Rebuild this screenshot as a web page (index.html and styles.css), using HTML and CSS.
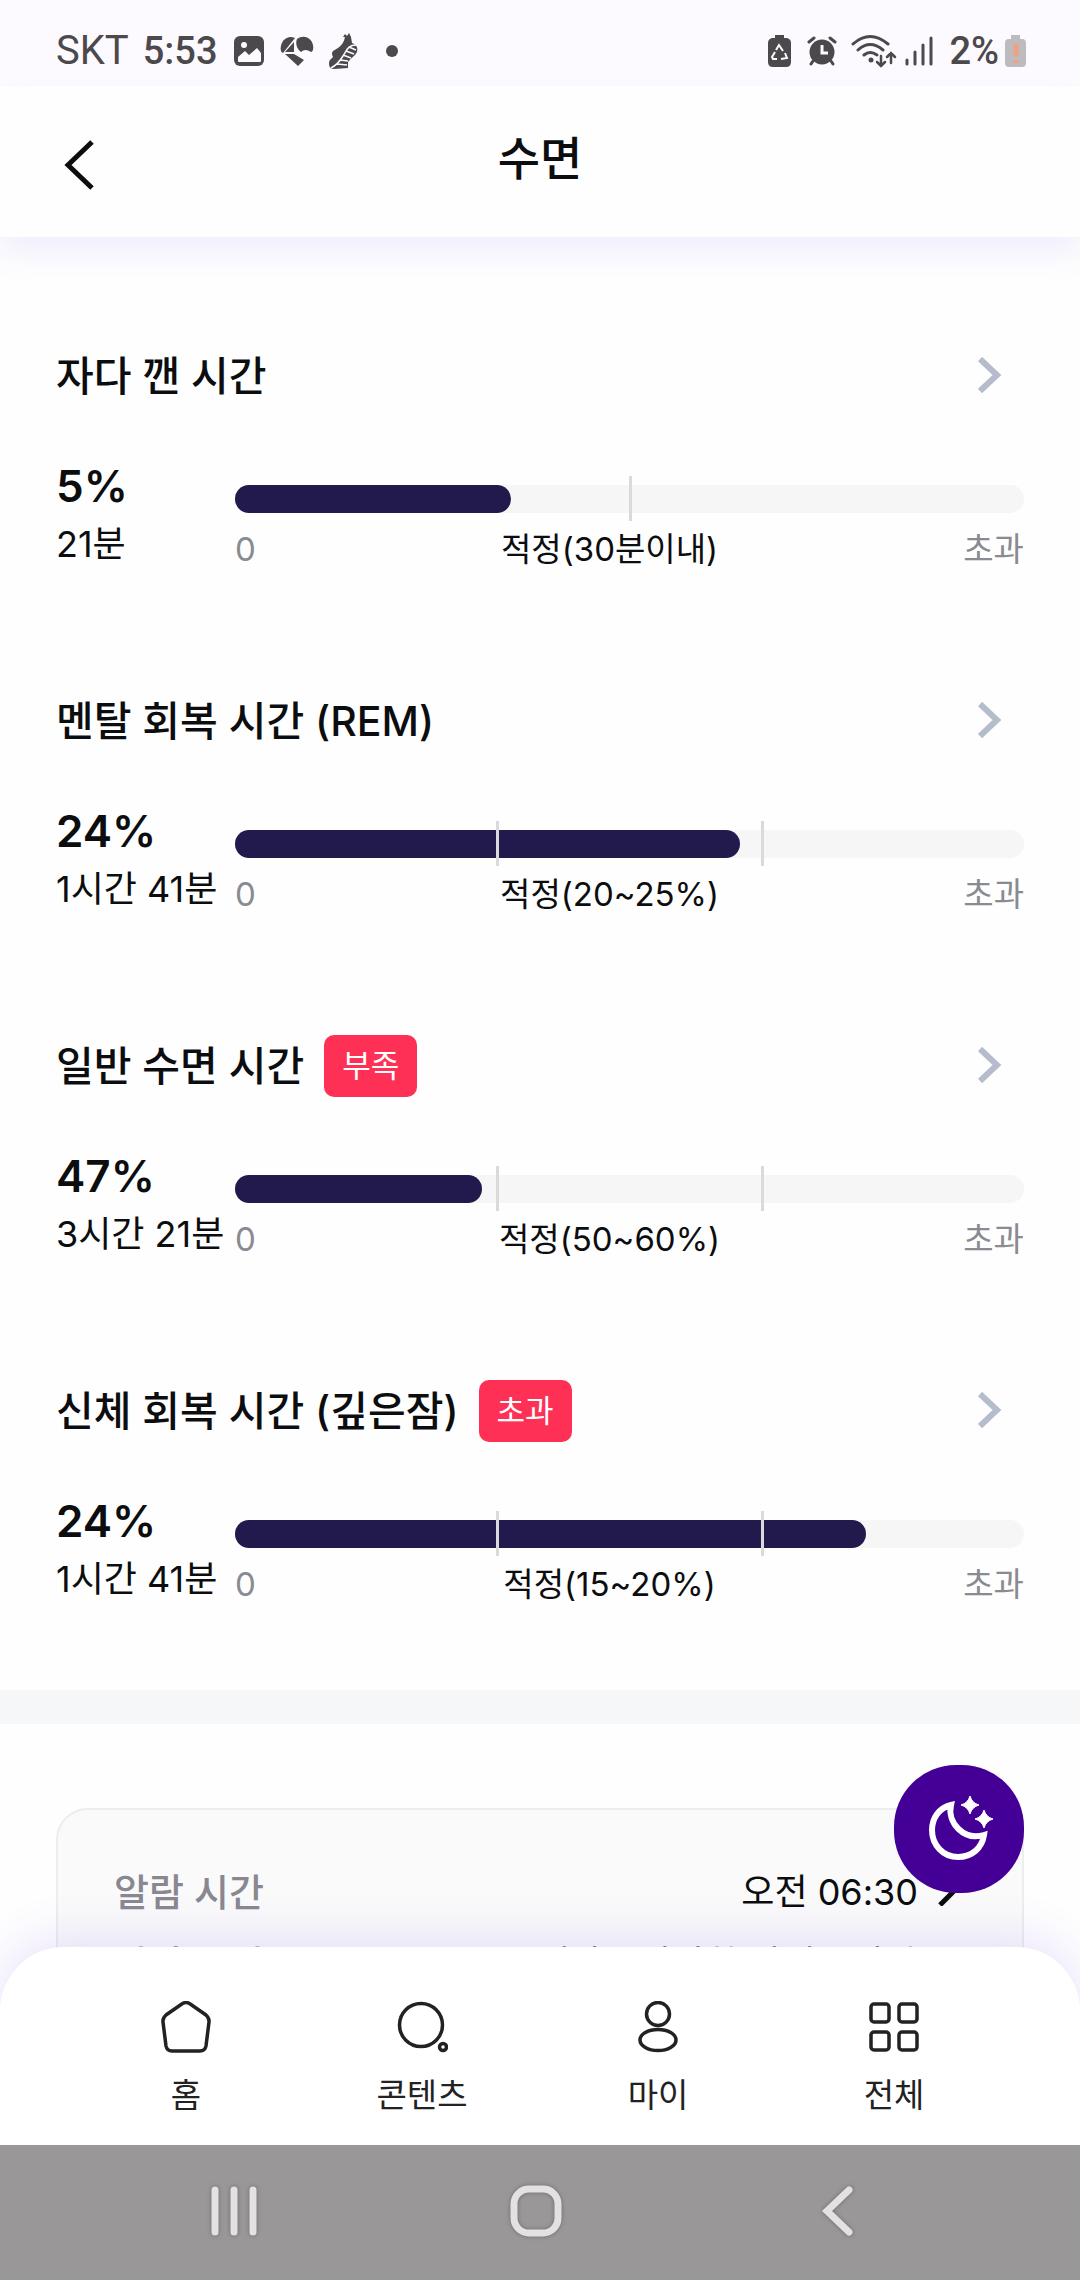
FILE: index.html
```html
<!DOCTYPE html>
<html lang="ko">
<head>
    <meta charset="UTF-8">
    <meta name="viewport" content="width=device-width, initial-scale=1.0">
    <title>수면</title>
    <link rel="stylesheet" href="styles.css">
</head>
<body>
    <div class="status-bar">
        <div class="status-left">
            <span class="carrier">SKT</span>
            <span class="clock">5:53</span>
            <svg class="status-picture" width="30" height="30" viewBox="0 0 30 30">
                <rect width="30" height="30" rx="6" fill="#4b494c"/>
                <circle cx="10" cy="9" r="3" fill="#fdfaff"/>
                <path d="M4 25v-4l7-6 4 4 8-7 4 5v8q0 1-1 1H5q-1 0-1-1z" fill="#fdfaff"/>
            </svg>
            <svg class="status-heart" width="34" height="30" viewBox="0 0 34 30">
                <path d="M1 15C-1 6 7-2 15 2L3 17q-1 0-2-2z" fill="#4b494c"/>
                <path d="M14 6v10H5z" fill="#4b494c"/>
                <path d="M17 3C25-3 35 4 33 14q-1 2-2 2-6-4-10 0c-4-3-6-8-4-13zM5 18h9l10 6-6 6z" fill="#4b494c"/>
            </svg>
            <svg class="status-shoe" width="30" height="36" viewBox="0 0 30 36">
                <path d="M15 4l2-3 2 2 2-3 2 4 1 6c5 2 6 5 5 9-2 4-6 6-9 10v6l-14 1q-5 0-5-5 0-4 2-5l2-2q-2-4 0-6l5-3c4-3 6-6 7-11z" fill="#4b494c"/>
                <path d="M28 12c-8 0-9 5-13 11-3 5-6 9-12 12M21 14l7 3M18 18l8 3M15 22l8 3M12 27l8 1M9 31l10 1" fill="none" stroke="#fdfaff" stroke-width="1.5"/>
            </svg>
            <span class="status-dot"></span>
        </div>
        <div class="status-right">
            <svg class="status-saver" width="23" height="32" viewBox="0 0 23 32">
                <path d="M7 0h9v3h3q4 1 4 5v19q0 5-5 5H5q-5 0-5-5V8q0-4 4-5h3z" fill="#4b494c"/>
                <path d="M8 15l3-5 4 6M17 18l2 5-6 1M9 24H5l-1-2 3-5" fill="none" stroke="#fdfaff" stroke-width="2"/>
            </svg>
            <svg class="status-alarm" width="30" height="30" viewBox="0 0 30 30">
                <circle cx="15" cy="16" r="12.500" fill="#4b494c"/>
                <path d="M2 6l5-4M23 2l5 4M6 25l-2 3M24 25l2 3" stroke="#4b494c" stroke-width="3" stroke-linecap="round"/>
                <path d="M15 9v8h6" fill="none" stroke="#fdfaff" stroke-width="3"/>
            </svg>
            <svg class="status-wifi" width="46" height="34" viewBox="0 0 46 34">
                <g fill="none" stroke="#4b494c" stroke-width="3" stroke-linecap="round">
                    <path d="M2 10q17-15 35 0M7 16q12-11 25 0M13 21q6-5 13 0"/>
                    <path d="M30 22v10M26 28l4 4 4-4M40 29V19M36 23l4-4 4 4" stroke-width="2.500"/>
                </g>
                <circle cx="20" cy="26" r="2.500" fill="#4b494c"/>
            </svg>
            <svg class="status-signal" width="28" height="30" viewBox="0 0 28 30">
                <path d="M2 24v4M10 16v12M18 9v19M26 2v26" stroke="#4b494c" stroke-width="3" stroke-linecap="round"/>
            </svg>
            <span class="battery-level">2%</span>
            <svg class="status-battery" width="21" height="32" viewBox="0 0 21 32">
                <path d="M6 0h9v4h2q4 0 4 4v20q0 4-4 4H4q-4 0-4-4V8q0-4 4-4h2z" fill="#bdbbbe"/>
                <path d="M11 9v12M11 25v3" stroke="#f0a184" stroke-width="5"/>
            </svg>
        </div>
    </div>

    <header class="app-header">
        <button class="back-button" aria-label="뒤로">
            <svg width="32" height="50" viewBox="0 0 32 50">
                <path d="M28 2L4 25l24 23" fill="none" stroke="#0c0d0f" stroke-width="5"/>
            </svg>
        </button>
        <h1>수면</h1>
    </header>

    <main class="content">
        <section class="metrics">
            <article class="metric">
                <a class="metric-head" href="#wake">
                    <h2>자다 깬 시간</h2>
                    <svg class="chevron" width="24" height="38" viewBox="0 0 24 38"><path d="M2 2l17 16L2 34"/></svg>
                </a>
                <div class="metric-body">
                    <div class="metric-value">
                        <strong>5%</strong>
                        <span>21분</span>
                    </div>
                    <div class="metric-chart">
                        <div class="bar">
                            <div class="bar-fill" style="width: 35%"></div>
                            <i class="tick" style="left: 50%"></i>
                        </div>
                        <div class="bar-labels">
                            <span>0</span>
                            <span class="range">적정(30분이내)</span>
                            <span>초과</span>
                        </div>
                    </div>
                </div>
            </article>

            <article class="metric">
                <a class="metric-head" href="#rem">
                    <h2>멘탈 회복 시간 (REM)</h2>
                    <svg class="chevron" width="24" height="38" viewBox="0 0 24 38"><path d="M2 2l17 16L2 34"/></svg>
                </a>
                <div class="metric-body">
                    <div class="metric-value">
                        <strong>24%</strong>
                        <span>1시간 41분</span>
                    </div>
                    <div class="metric-chart">
                        <div class="bar">
                            <div class="bar-fill" style="width: 64%"></div>
                            <i class="tick" style="left: 33.2%"></i>
                            <i class="tick" style="left: 66.8%"></i>
                        </div>
                        <div class="bar-labels">
                            <span>0</span>
                            <span class="range">적정(20~25%)</span>
                            <span>초과</span>
                        </div>
                    </div>
                </div>
            </article>

            <article class="metric">
                <a class="metric-head" href="#light">
                    <h2>일반 수면 시간</h2>
                    <span class="badge">부족</span>
                    <svg class="chevron" width="24" height="38" viewBox="0 0 24 38"><path d="M2 2l17 16L2 34"/></svg>
                </a>
                <div class="metric-body">
                    <div class="metric-value">
                        <strong>47%</strong>
                        <span>3시간 21분</span>
                    </div>
                    <div class="metric-chart">
                        <div class="bar">
                            <div class="bar-fill" style="width: 31.3%"></div>
                            <i class="tick" style="left: 33.2%"></i>
                            <i class="tick" style="left: 66.8%"></i>
                        </div>
                        <div class="bar-labels">
                            <span>0</span>
                            <span class="range">적정(50~60%)</span>
                            <span>초과</span>
                        </div>
                    </div>
                </div>
            </article>

            <article class="metric">
                <a class="metric-head" href="#deep">
                    <h2>신체 회복 시간 (깊은잠)</h2>
                    <span class="badge">초과</span>
                    <svg class="chevron" width="24" height="38" viewBox="0 0 24 38"><path d="M2 2l17 16L2 34"/></svg>
                </a>
                <div class="metric-body">
                    <div class="metric-value">
                        <strong>24%</strong>
                        <span>1시간 41분</span>
                    </div>
                    <div class="metric-chart">
                        <div class="bar">
                            <div class="bar-fill" style="width: 80%"></div>
                            <i class="tick" style="left: 33.2%"></i>
                            <i class="tick" style="left: 66.8%"></i>
                        </div>
                        <div class="bar-labels">
                            <span>0</span>
                            <span class="range">적정(15~20%)</span>
                            <span>초과</span>
                        </div>
                    </div>
                </div>
            </article>
        </section>

        <section class="alarm">
            <div class="alarm-card">
                <a class="alarm-row" href="#alarm-time">
                    <span class="alarm-name">알람 시간</span>
                    <span>오전 06:30</span>
                    <svg width="20" height="34" viewBox="0 0 20 34"><path d="M2 5l14 14L2 33"/></svg>
                </a>
                <a class="alarm-row" href="#alarm-sound">
                    <span class="alarm-name">알람 소리</span>
                    <span>시계가 - 발랄한 산책 - 알람</span>
                    <svg width="20" height="34" viewBox="0 0 20 34"><path d="M2 5l14 14L2 33"/></svg>
                </a>
            </div>
        </section>
    </main>

    <footer class="bottom">
        <button class="sleep-button" aria-label="수면 시작">
            <svg width="66" height="66" viewBox="0 0 66 66">
                <path d="M24 9C12 12 5 22 5 34c0 15 11 27 26 27 14 0 24-9 26-22C37 45 20 27 24 9z" fill="none" stroke="#fff" stroke-width="6"/>
                <path d="M43 0q2 7 9 9-7 2-9 9-2-7-9-9 7-2 9-9zM57 14q2 7 9 9-7 2-9 9-2-7-9-9 7-2 9-9z" fill="#fff" stroke="#fff" stroke-linejoin="round"/>
            </svg>
        </button>
        <nav class="tab-bar">
            <a href="#home">
                <svg width="52" height="52" viewBox="0 0 52 52">
                    <path d="M22.500 2.500q3.500-2 7 0L46 14q3.500 3 3 7l-3 24q-1 5-6 5H12q-5 0-6-5L3 21q-.500-4 3-7z"/>
                </svg>
                <span>홈</span>
            </a>
            <a href="#contents">
                <svg width="52" height="52" viewBox="0 0 52 52">
                    <circle cx="25" cy="24" r="21.500"/>
                    <circle cx="47" cy="46" r="3.500"/>
                </svg>
                <span>콘텐츠</span>
            </a>
            <a href="#my">
                <svg width="52" height="52" viewBox="0 0 52 52">
                    <circle cx="26" cy="13" r="11.500"/>
                    <ellipse cx="26" cy="39" rx="18" ry="10.500"/>
                </svg>
                <span>마이</span>
            </a>
            <a href="#all">
                <svg width="52" height="52" viewBox="0 0 52 52">
                    <rect x="3" y="3" width="18" height="18" rx="3"/>
                    <rect x="31" y="3" width="18" height="18" rx="3"/>
                    <rect x="3" y="31" width="18" height="18" rx="3"/>
                    <rect x="31" y="31" width="18" height="18" rx="3"/>
                </svg>
                <span>전체</span>
            </a>
        </nav>
        <div class="system-bar">
            <button aria-label="최근 앱">
                <svg width="54" height="54" viewBox="0 0 54 54"><path d="M8 6v42M27 6v42M46 6v42"/></svg>
            </button>
            <button aria-label="홈">
                <svg width="54" height="54" viewBox="0 0 54 54"><rect x="5" y="5" width="44" height="44" rx="15"/></svg>
            </button>
            <button aria-label="뒤로 가기">
                <svg width="54" height="54" viewBox="0 0 54 54"><path d="M38 6L16 27l22 21"/></svg>
            </button>
        </div>
    </footer>
</body>
</html>
```

FILE: styles.css
```css
* {
    box-sizing: border-box;
}
body {
    display: flex;
    flex-direction: column;
    height: 100vh;
    margin: 0;
    overflow: hidden;
    background-color: #fefefe;
    color: #0c0d0f;
    font-family: Inter, "Noto Sans CJK KR", sans-serif;
}
a {
    color: inherit;
    text-decoration: none;
}
button {
    padding: 0;
    border: none;
    background: none;
    cursor: pointer;
}
svg {
    display: block;
    flex: none;
}
h1, h2 {
    margin: 0;
    font-weight: 500;
}

/* Status bar */
.status-bar {
    display: flex;
    justify-content: space-between;
    padding: 16px 54px 0 56px;
    height: 86px;
    background-color: #fdfaff;
    color: #4b494c;
    font-family: Roboto, sans-serif;
    font-size: 40px;
    line-height: 70px;
}
.status-left, .status-right {
    display: flex;
    align-items: center;
}
.clock, .battery-level {
    font-weight: 500;
    font-size: 38px;
}
.clock {
    margin: 0 16px 0 14px;
}
.status-heart {
    margin: 0 14px 0 16px;
}
.status-dot {
    width: 12px;
    height: 12px;
    margin-left: 28px;
    border-radius: 50%;
    background-color: #4b494c;
}
.status-alarm {
    margin: 0 14px 0 16px;
}
.status-signal {
    margin: 0 16px 0 8px;
}
.status-battery {
    margin-left: 6px;
}

/* Header */
.app-header {
    display: grid;
    grid-template-columns: 1fr auto 1fr;
    align-items: center;
    height: 151px;
    flex: none;
    padding: 0 64px;
    position: relative;
    z-index: 1;
    background-color: #fefefe;
    box-shadow: 0 16px 32px rgba(90, 40, 230, 0.08);
}
.app-header h1 {
    font-size: 46px;
    line-height: 64px;
    padding-bottom: 8px;
}
.back-button {
    justify-self: start;
    padding-top: 6px;
}

/* Sleep stages */
.content {
    flex: 1;
    min-height: 0;
    margin-bottom: -64px;
    overflow: hidden;
}
.metrics {
    display: grid;
    gap: 117px;
    padding: 108px 56px 82px;
}
.metric-head {
    display: flex;
    align-items: center;
    height: 62px;
    padding-right: 22px;
}
.metric-head h2 {
    font-size: 41px;
    line-height: 62px;
}
.badge {
    margin-left: 20px;
    padding: 0 18px;
    border-radius: 10px;
    background-color: #ff3056;
    color: #fff;
    font-size: 31px;
    line-height: 62px;
}
.chevron {
    margin-left: auto;
}
.chevron path {
    fill: none;
    stroke: #b5bccb;
    stroke-width: 6;
}
.metric-body {
    display: flex;
    padding-top: 50px;
}
.metric-value {
    display: flex;
    flex-direction: column;
    width: 179px;
    white-space: nowrap;
}
.metric-value strong {
    font-size: 44px;
    font-weight: 600;
    line-height: 58px;
}
.metric-value span {
    font-size: 36px;
    line-height: 58px;
}
.metric-chart {
    flex: 1;
    padding-top: 28px;
}
.bar {
    position: relative;
    height: 28px;
    border-radius: 14px;
    background-color: #f6f6f6;
}
.bar-fill {
    height: 100%;
    border-radius: 14px;
    background-color: #22194d;
}
.tick {
    position: absolute;
    top: -9px;
    width: 3px;
    height: 45px;
    margin-left: -1px;
    background-color: #dadadd;
}
.bar-labels {
    display: flex;
    justify-content: space-between;
    padding-top: 12px;
    color: #898b91;
    font-size: 33px;
    line-height: 48px;
}
.range {
    color: #0c0d0f;
}

/* Alarm card */
.alarm {
    padding: 84px 56px 100px;
    border-top: 34px solid #f6f7f9;
}
.alarm-card {
    padding: 43px 64px 43px 56px;
    border: 2px solid #ededef;
    border-radius: 32px;
    background-color: #fafafa;
}
.alarm-row {
    display: flex;
    align-items: center;
    gap: 20px;
    height: 72px;
    font-size: 36px;
}
.alarm-name {
    margin-right: auto;
    color: #898891;
    font-size: 38px;
    font-weight: 500;
}
.alarm-row path {
    fill: none;
    stroke: #0c0d0f;
    stroke-width: 5;
}

/* Bottom area */
.bottom {
    position: relative;
    flex: none;
    z-index: 2;
}
.sleep-button {
    position: absolute;
    right: 56px;
    bottom: 100%;
    display: grid;
    place-items: center;
    width: 130px;
    height: 128px;
    margin-bottom: 54px;
    padding-left: 2px;
    border-radius: 62px;
    background-color: #440096;
    z-index: 1;
}
.tab-bar {
    display: grid;
    grid-template-columns: repeat(4, 1fr);
    position: relative;
    padding: 54px 68px 24px;
    border-radius: 64px 64px 0 0;
    background-color: #fff;
    box-shadow: 0 -10px 48px rgba(90, 40, 230, 0.12);
}
.tab-bar a {
    display: flex;
    flex-direction: column;
    align-items: center;
    gap: 16px;
    color: #222;
    font-size: 33px;
    line-height: 52px;
}
.tab-bar svg {
    fill: none;
    stroke: #222;
    stroke-width: 3.5;
}
.system-bar {
    display: grid;
    grid-template-columns: repeat(3, 1fr);
    justify-items: center;
    align-items: center;
    position: relative;
    height: 135px;
    padding: 0 91px 3px 83px;
    background-color: #999797;
}
.system-bar svg {
    fill: none;
    stroke: #e3e1e3;
    stroke-width: 7;
    stroke-linecap: round;
    filter: drop-shadow(0 0 2px rgba(0, 0, 0, 0.3));
}
```
